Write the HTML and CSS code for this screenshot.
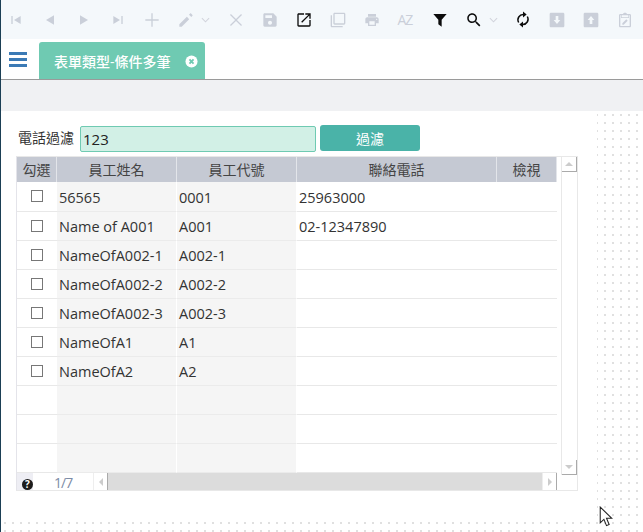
FILE: index.html
```html
<!doctype html>
<html>
<head>
	<meta charset="utf-8">
	<title>表單類型-條件多筆</title>
	<link rel="stylesheet" href="styles.css">
</head>
<body>
	<div class="toolbar">
		<span class="tool off"><svg viewBox="0 0 24 24"><path d="M5 6h2v12H5zM19 6v12l-10-6z"/></svg></span>
		<span class="tool off"><svg viewBox="0 0 24 24"><path d="M18 5v14L6 12z"/></svg></span>
		<span class="tool off"><svg viewBox="0 0 24 24"><path d="M6 5v14l12-7z"/></svg></span>
		<span class="tool off"><svg viewBox="0 0 24 24"><path d="M5 6v12l10-6zM17 6h2v12h-2z"/></svg></span>
		<span class="tool off"><svg viewBox="0 0 24 24"><path d="M11 2h2v9h9v2h-9v9h-2v-9H2v-2h9z"/></svg></span>
		<span class="tool off wide"><svg viewBox="0 0 24 24"><path d="M2 18.500V22h3.500L16.800 10.700l-3.500-3.500zM21.700 5.800c.4-.4.4-1 0-1.400l-2.100-2.100c-.4-.4-1-.4-1.400 0l-1.700 1.700 3.500 3.500z"/></svg><svg class="caret" viewBox="0 0 10 6"><path d="M1 1l4 4 4-4"/></svg></span>
		<span class="tool off"><svg viewBox="0 0 24 24"><path d="M4.400 3L12 10.600 19.600 3 21 4.400 13.400 12l7.600 7.600-1.400 1.400-7.600-7.600L4.400 21 3 19.600 10.600 12 3 4.400z"/></svg></span>
		<span class="tool off"><svg viewBox="0 0 24 24"><path d="M17 2H4C2.900 2 2 2.900 2 4v16c0 1.100.9 2 2 2h16c1.100 0 2-.9 2-2V7zm-5 17c-1.700 0-3-1.300-3-3s1.300-3 3-3 3 1.300 3 3-1.300 3-3 3zm3-10H5V5h10z"/></svg></span>
		<span class="tool on"><svg viewBox="0 0 24 24"><path d="M20 20H4V4h8V2H4C2.900 2 2 2.900 2 4v16c0 1.100.9 2 2 2h16c1.100 0 2-.9 2-2v-8h-2zM14 2v2h4.600L7.800 14.800l1.400 1.400L20 5.400V10h2V2z"/></svg></span>
		<span class="tool off"><svg viewBox="0 0 24 24"><path d="M3 5H1v16c0 1.100.9 2 2 2h16v-2H3zM21 1H7C5.900 1 5 1.900 5 3v14c0 1.100.9 2 2 2h14c1.100 0 2-.9 2-2V3c0-1.100-.9-2-2-2zm0 16H7V3h14z"/></svg></span>
		<span class="tool off"><svg viewBox="0 0 24 24"><path d="M19 8H5c-1.700 0-3 1.300-3 3v6h4v4h12v-4h4v-6c0-1.700-1.300-3-3-3zm-3 11H8v-5h8zm3-7c-.6 0-1-.4-1-1s.4-1 1-1 1 .4 1 1-.4 1-1 1zM18 3H6v4h12z"/></svg></span>
		<span class="tool off sort">AZ</span>
		<span class="tool on"><svg viewBox="0 0 24 24"><path d="M2 3h20l-7.500 8.500V22l-5-3.500v-7z"/></svg></span>
		<span class="tool on wide"><svg class="big" viewBox="0 0 24 24"><path d="M15.500 14h-.8l-.3-.3c1-1.100 1.600-2.600 1.600-4.200C16 5.900 13.100 3 9.500 3S3 5.900 3 9.500 5.900 16 9.500 16c1.600 0 3.100-.6 4.200-1.600l.3.3v.8l5 5 1.500-1.500zm-6 0C7 14 5 12 5 9.500S7 5 9.500 5 14 7 14 9.500 12 14 9.500 14z"/></svg><svg class="caret" viewBox="0 0 10 6"><path d="M1 1l4 4 4-4"/></svg></span>
		<span class="tool on"><svg class="sync-icon" viewBox="0 0 24 24"><path class="sync" d="M5.500 16.500A8 8 0 0 1 13 4.500M18.500 7.500A8 8 0 0 1 11 19.500"/><path d="M12 0l5.500 4.500L12 9zM12 15l-5.500 4.500L12 24z"/></svg></span>
		<span class="tool off"><svg viewBox="0 0 24 24"><path fill-rule="evenodd" d="M3 1h18c1.100 0 2 .9 2 2v18c0 1.100-.9 2-2 2H3c-1.100 0-2-.9-2-2V3c0-1.100.9-2 2-2zm7 5v6H7l5 6 5-6h-3V6z"/></svg></span>
		<span class="tool off"><svg viewBox="0 0 24 24"><path fill-rule="evenodd" d="M3 1h18c1.100 0 2 .9 2 2v18c0 1.100-.9 2-2 2H3c-1.100 0-2-.9-2-2V3c0-1.100.9-2 2-2zm7 17v-6H7l5-6 5 6h-3v6z"/></svg></span>
		<span class="tool off"><svg viewBox="0 0 24 24"><path d="M19 3h-4c-.4-1.200-1.600-2-3-2s-2.600.8-3 2H5C3.900 3 3 3.900 3 5v16c0 1.100.9 2 2 2h14c1.100 0 2-.9 2-2V5c0-1.100-.9-2-2-2zM7 5h10v3H7zm12 16H5V5h1v4h12V5h1zM8 19v-2l6-6 2 2-6 6z"/></svg></span>
	</div>

	<div class="tabbar">
		<button class="menu-btn" type="button"><span></span><span></span><span></span></button>
		<div class="tab">
			<span>表單類型-條件多筆</span>
			<svg class="tab-close" viewBox="0 0 14 14"><circle cx="7" cy="7" r="6.500" fill="#fff"/><path d="M4.800 4.800l4.400 4.400M9.200 4.800l-4.400 4.400" stroke="#6fcab2" stroke-width="2"/></svg>
		</div>
	</div>

	<div class="band"></div>

	<main class="panel">
		<form class="filter">
			<label class="filter-label">電話過濾</label>
			<input class="filter-input" type="text" value="123">
			<button class="filter-btn" type="button">過濾</button>
		</form>

		<div class="grid">
			<div class="grid-main">
				<table class="rows">
					<thead>
						<tr>
							<th class="c-check">勾選</th>
							<th class="c-name">員工姓名</th>
							<th class="c-code">員工代號</th>
							<th class="c-phone">聯絡電話</th>
							<th class="c-view">檢視</th>
						</tr>
					</thead>
					<tbody>
						<tr><td class="c-check"><i class="box"></i></td><td class="shade">56565</td><td class="shade">0001</td><td>25963000</td><td></td></tr>
						<tr><td class="c-check"><i class="box"></i></td><td class="shade">Name of A001</td><td class="shade">A001</td><td>02-12347890</td><td></td></tr>
						<tr><td class="c-check"><i class="box"></i></td><td class="shade">NameOfA002-1</td><td class="shade">A002-1</td><td></td><td></td></tr>
						<tr><td class="c-check"><i class="box"></i></td><td class="shade">NameOfA002-2</td><td class="shade">A002-2</td><td></td><td></td></tr>
						<tr><td class="c-check"><i class="box"></i></td><td class="shade">NameOfA002-3</td><td class="shade">A002-3</td><td></td><td></td></tr>
						<tr><td class="c-check"><i class="box"></i></td><td class="shade">NameOfA1</td><td class="shade">A1</td><td></td><td></td></tr>
						<tr><td class="c-check"><i class="box"></i></td><td class="shade">NameOfA2</td><td class="shade">A2</td><td></td><td></td></tr>
						<tr><td></td><td class="shade"></td><td class="shade"></td><td></td><td></td></tr>
						<tr><td></td><td class="shade"></td><td class="shade"></td><td></td><td></td></tr>
						<tr><td></td><td class="shade"></td><td class="shade"></td><td></td><td></td></tr>
					</tbody>
				</table>
				<div class="pager">
					<span class="help">?</span>
					<span class="count">1/7</span>
					<span class="hbtn"><i class="arrow-left"></i></span>
					<span class="htrack"></span>
					<span class="hbtn"><i class="arrow-right"></i></span>
				</div>
			</div>
			<div class="vscroll">
				<span class="vbtn"><i class="arrow-up"></i></span>
				<span class="vbtn"><i class="arrow-down"></i></span>
			</div>
		</div>
	</main>

	<svg class="cursor" viewBox="0 0 13 20"><path d="M1 1v15l3.500-3.300 2.500 6 2.500-1-2.500-6h5z" fill="#fff" stroke="#222" stroke-width="1"/></svg>
</body>
</html>
```

FILE: styles.css
```css
* {
	box-sizing: border-box;
}

html, body {
	height: 100%;
}

body {
	margin: 0;
	position: relative;
	overflow: hidden;
	display: flex;
	flex-direction: column;
	border-left: 1px solid #1b3f55;
	font-family: "Open Sans", "Noto Sans CJK TC", sans-serif;
	font-size: 14px;
	color: #333;
	background-color: #fff;
	background-image: conic-gradient(at 2px 2px, transparent 75%, #e0e0e0 0);
	background-size: 8px 8px;
	background-position: 4px 2px;
}

/* toolbar */
.toolbar {
	display: flex;
	align-items: center;
	height: 39px;
	padding-left: 6px;
	background: #f4f8fb;
}

.tool {
	display: flex;
	align-items: center;
	flex: none;
	width: 34px;
}

.tool.wide {
	width: 49.500px;
}

.tool svg {
	display: block;
	width: 16px;
	height: 16px;
	margin-left: 1px;
	fill: currentColor;
}

.tool svg.big {
	width: 18px;
	height: 18px;
	margin-left: 0;
}

.tool svg.sync-icon {
	height: 17px;
}

.tool.off {
	color: #cacfd9;
}

.tool.on {
	color: #0c0c0c;
}

.tool .caret {
	width: 9px;
	height: 6px;
	margin-left: 7px;
	fill: none;
	stroke: #d2d4dc;
	stroke-width: 1.200;
}

.tool .big + .caret {
	margin-left: 6px;
}

.sync {
	fill: none;
	stroke: currentColor;
	stroke-width: 2.200;
}

.sort {
	font-size: 14px;
	letter-spacing: -1px;
	padding-left: 1px;
	color: #d8dbe2;
}

/* tabs */
.tabbar {
	display: flex;
	align-items: flex-end;
	height: 41px;
	padding-left: 8px;
	border-bottom: 1px solid #9a9a9a;
	background: #fff;
}

.menu-btn {
	display: flex;
	flex-direction: column;
	gap: 3px;
	width: 18px;
	height: 14px;
	margin: 0 12px 13px 0;
	padding: 0;
	border: 0;
	background: none;
}

.menu-btn span {
	display: block;
	height: 3px;
	flex: none;
	background: #3b7ab5;
}

.tab {
	display: flex;
	align-items: center;
	justify-content: space-between;
	width: 166px;
	height: 37px;
	padding: 0 7px 0 15px;
	border-radius: 3px 3px 0 0;
	background: #6fcab2;
	color: #fff;
	font-weight: 500;
}

.tab-close {
	width: 13px;
	height: 13px;
	margin-top: 1px;
}

.band {
	height: 31px;
	background: #f0f1f3;
}

/* content */
.panel {
	width: 596px;
	height: 411px;
	padding: 14px 0 0 15px;
	background: #fff;
}

.filter {
	display: flex;
	align-items: flex-start;
	height: 31px;
	margin: 0;
}

.filter-label {
	width: 64px;
	padding: 3px 0 0 2px;
	line-height: 20px;
}

.filter-input {
	width: 236px;
	height: 26px;
	margin-top: 1px;
	padding: 0 2px;
	border: 1px solid #6fcab2;
	border-radius: 2px;
	background: #d2f0e6;
	font: inherit;
	font-size: 15px;
	color: #222;
}

.filter-btn {
	width: 100px;
	height: 26px;
	margin-left: 4px;
	padding: 0;
	border: 0;
	border-radius: 3px;
	background: #4ab3a8;
	color: #fff;
	font: inherit;
}

.grid {
	display: flex;
	justify-content: space-between;
	width: 562px;
	height: 335px;
	border: 1px solid #e8e8e8;
	border-left-color: #e4e4ea;
}

.grid-main {
	width: 540px;
}

.rows {
	width: 540px;
	table-layout: fixed;
	border-collapse: separate;
	border-spacing: 0;
}

.rows th {
	height: 25px;
	padding: 0 0 2px;
	border-right: 1px solid #e3e5ea;
	background: #c5c9d3;
	font-weight: 400;
	color: #444;
	text-align: center;
}

.rows td {
	height: 29px;
	padding: 1px 2px 0;
	border-bottom: 1px solid #e8e8e8;
	font-size: 14.500px;
	white-space: nowrap;
}

.rows tbody tr:first-child td {
	height: 30px;
}

.rows td.shade {
	border-right: 1px solid #fff;
	background: #f5f5f5;
	border-bottom-color: #ebebeb;
}

.c-check {
	width: 40px;
}

.c-name,
.c-code {
	width: 120px;
}

.c-phone {
	width: 200px;
}

.c-view {
	width: 60px;
}

.rows td.c-check {
	padding: 0 0 2px;
	text-align: center;
}

.box {
	display: inline-block;
	width: 12px;
	height: 12px;
	border: 1px solid #777;
	vertical-align: -1px;
}

/* pager and scrollbars */
.pager {
	display: flex;
	align-items: stretch;
	height: 17px;
	background: #eeeef4;
}

.help {
	flex: none;
	width: 11px;
	height: 11px;
	margin: 6px 0 0 5px;
	border-radius: 50%;
	background: #1c1c1c;
	color: #fff;
	font-size: 10px;
	font-weight: 700;
	line-height: 11px;
	text-align: center;
}

.count {
	flex: none;
	width: 60px;
	padding: 1px 0 0 21px;
	background: #fff;
	font-size: 14px;
	line-height: 17px;
	letter-spacing: -1px;
	color: #7d8ca6;
}

.hbtn {
	display: flex;
	align-items: center;
	justify-content: center;
	flex: none;
	width: 15px;
	background: #fff;
	border-right: 1px solid #aaa;
	border-left: 1px solid #eee;
}

.htrack {
	flex: 1;
	background: #dcdcdc;
}

.vscroll {
	display: flex;
	flex-direction: column;
	width: 16px;
	height: 318px;
	justify-content: space-between;
	border-left: 1px solid #e8e8e8;
}

.vbtn {
	display: flex;
	align-items: center;
	justify-content: center;
	width: 15px;
	height: 15px;
	border-right: 1px solid #aaa;
	border-bottom: 1px solid #aaa;
	background: #fff;
}

.arrow-up,
.arrow-down {
	border-left: 4px solid transparent;
	border-right: 4px solid transparent;
}

.arrow-up {
	border-bottom: 4px solid #ccc;
}

.arrow-down {
	border-top: 4px solid #ccc;
}

.arrow-left,
.arrow-right {
	border-top: 4px solid transparent;
	border-bottom: 4px solid transparent;
}

.arrow-left {
	border-right: 4px solid #ccc;
}

.arrow-right {
	border-left: 4px solid #ccc;
}

.cursor {
	position: absolute;
	left: 598px;
	top: 506px;
	width: 14px;
	height: 21px;
}
```
